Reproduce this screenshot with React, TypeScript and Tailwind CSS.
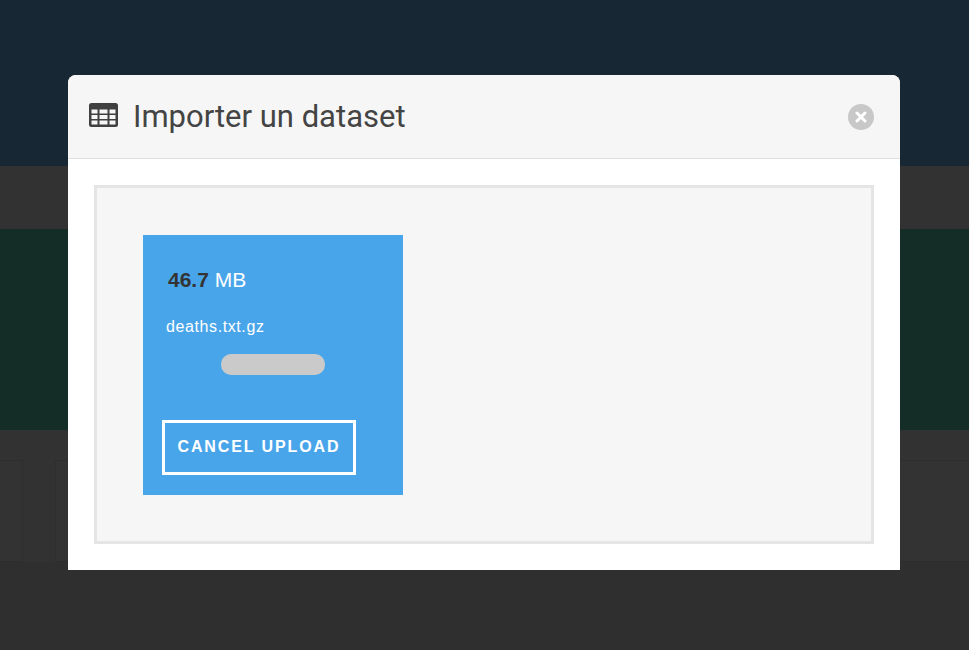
export default function App() {
  return (
    <div className="relative h-[650px] w-[969px] overflow-hidden bg-[#2f2f2f] font-['Liberation_Sans',sans-serif]">
      {/* Page behind the overlay */}
      <div className="h-[166px] bg-[#182734]" />
      <div className="h-[63px] bg-[#323232]" />
      <div className="h-[201px] bg-[#142d27]" />
      <div className="h-[132px] bg-[#323232] pt-[30px]">
        <div className="flex h-[102px] gap-[32px]">
          <div className="w-[23px] shrink-0 border-y border-r border-[#2e2e2e] bg-[#333333]" />
          <div className="flex-1 border border-r-0 border-[#2e2e2e] bg-[#333333]" />
        </div>
      </div>

      {/* Modal */}
      <div className="absolute left-[68px] top-[75px] flex h-[495px] w-[832px] flex-col overflow-hidden rounded-t-[8px] bg-white">
        <div className="flex h-[84px] shrink-0 items-center justify-between border-b border-[#dedede] bg-[#f6f6f6] pl-[21px] pr-[26px]">
          <div className="flex items-center gap-[15px]">
            <svg viewBox="0 0 29 24" className="mt-[-3px] h-[24px] w-[29px]" fill="#404040">
              <path
                fillRule="evenodd"
                d="M2.5 0h24A2.5 2.5 0 0 1 29 2.5v19a2.5 2.5 0 0 1-2.5 2.5h-24A2.5 2.5 0 0 1 0 21.500v-19A2.500 2.500 0 0 1 2.500 0zM2.500 6.500v4h6v-4zm8 0v4h8v-4zm10 0v4h6v-4zM2.500 12v4h6v-4zm8 0v4h8v-4zm10 0v4h6v-4zM2.500 17.500v4h6v-4zm8 0v4h8v-4zm10 0v4h6v-4z"
              />
            </svg>
            <h1 className="font-['Roboto',sans-serif] text-[31px] font-normal leading-none text-[#444444]">
              Importer un dataset
            </h1>
          </div>
          <button className="flex h-[26px] w-[26px] items-center justify-center rounded-full bg-[#c8c8c8]">
            <svg viewBox="0 0 12 12" className="h-[12px] w-[12px]">
              <path d="M2 2l8 8M10 2l-8 8" stroke="white" strokeWidth="3" strokeLinecap="round" />
            </svg>
          </button>
        </div>

        <div className="px-[26px] pt-[26px]">
          <div className="h-[359px] border-[3px] border-[#e5e5e5] bg-[#f6f6f6] pl-[46px] pt-[47px]">
            <div className="flex h-[260px] w-[260px] flex-col bg-[#49a5ea] text-white">
              <div className="pl-[25px] pt-[33px] text-[21px] leading-[24px]">
                <strong className="font-bold text-[#333333]">46.7</strong> MB
              </div>
              <div className="pl-[23px] pt-[25px] text-[16px] leading-[20px] tracking-[0.6px]">deaths.txt.gz</div>
              <div className="mx-auto mt-[17px] h-[21px] w-[104px] rounded-[10px] bg-[#cacaca]" />
              <button className="ml-[19px] mt-[45px] h-[55px] w-[194px] border-[3px] border-white pb-[2px] text-center text-[16px] font-bold tracking-[1.9px] text-white">
                CANCEL UPLOAD
              </button>
            </div>
          </div>
        </div>
      </div>
    </div>
  )
}
